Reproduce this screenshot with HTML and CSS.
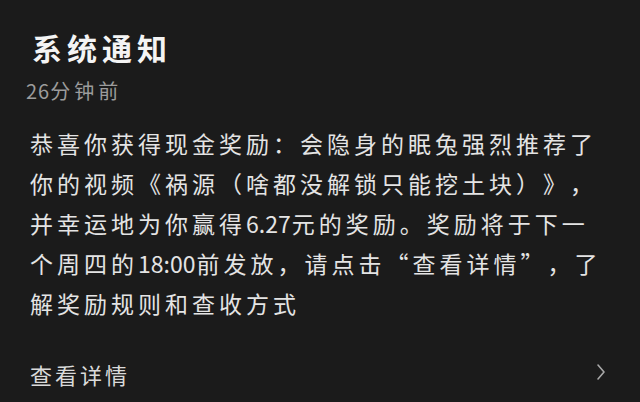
FILE: index.html
```html
<!DOCTYPE html>
<html lang="zh-CN">
<head>
<meta charset="utf-8">
<link rel="stylesheet" href="styles.css">
</head>
<body>
<div class="card">
  <h1 class="title">系统通知</h1>
  <div class="time"><span class="num">26</span>分钟前</div>
  <p class="content">恭喜你获得现金奖励：会隐身的眠兔强烈推荐了<br>你的视频《祸源（啥都没解锁只能挖土块）》，<br>并幸运地为你赢得<span class="num">6.27</span>元的奖励。奖励将于下一<br>个周四的<span class="num">18:00</span>前发放，请点击“查看详情”，了<br>解奖励规则和查收方式</p>
  <div class="details">
    <span class="details-label">查看详情</span>
    <svg class="chevron" width="10" height="18" viewBox="0 0 10 18"><path d="M2 2 L8 9 L2 16" fill="none" stroke="#a8a8a8" stroke-width="1.6" stroke-linecap="round" stroke-linejoin="round"/></svg>
  </div>
</div>
</body>
</html>
```

FILE: styles.css
```css
html, body {
  margin: 0;
  padding: 0;
  background: #1b1b1b;
}
body {
  width: 640px;
  height: 402px;
  overflow: hidden;
  font-family: "Noto Sans CJK SC", "Noto Sans", sans-serif;
  text-spacing-trim: space-all;
}
.card {
  display: flex;
  flex-direction: column;
  padding: 27px 0 0 30px;
}
.title {
  margin: 0 0 0 2px;
  font-size: 30px;
  line-height: 40px;
  font-weight: 700;
  letter-spacing: 5px;
  color: #f4f4f4;
}
.time {
  margin: 10px 0 0 -4px;
  font-size: 20px;
  line-height: 28px;
  letter-spacing: 4px;
  color: #9c9c9c;
}
.time .num {
  letter-spacing: 1px;
}
.content {
  margin: 18px 0 0 0;
  font-size: 23px;
  line-height: 40px;
  letter-spacing: 4px;
  color: #e4e4e4;
  white-space: nowrap;
  text-spacing-trim: space-all;
}
.content .num {
  letter-spacing: 0;
  margin-right: 1px;
}
.details {
  margin-top: 31px;
  height: 40px;
  display: flex;
  align-items: center;
  justify-content: space-between;
  padding-right: 34px;
}
.details-label {
  font-size: 22px;
  letter-spacing: 3px;
  color: #dadada;
  line-height: 40px;
}
.chevron {
  margin-top: -4px;
}
```
